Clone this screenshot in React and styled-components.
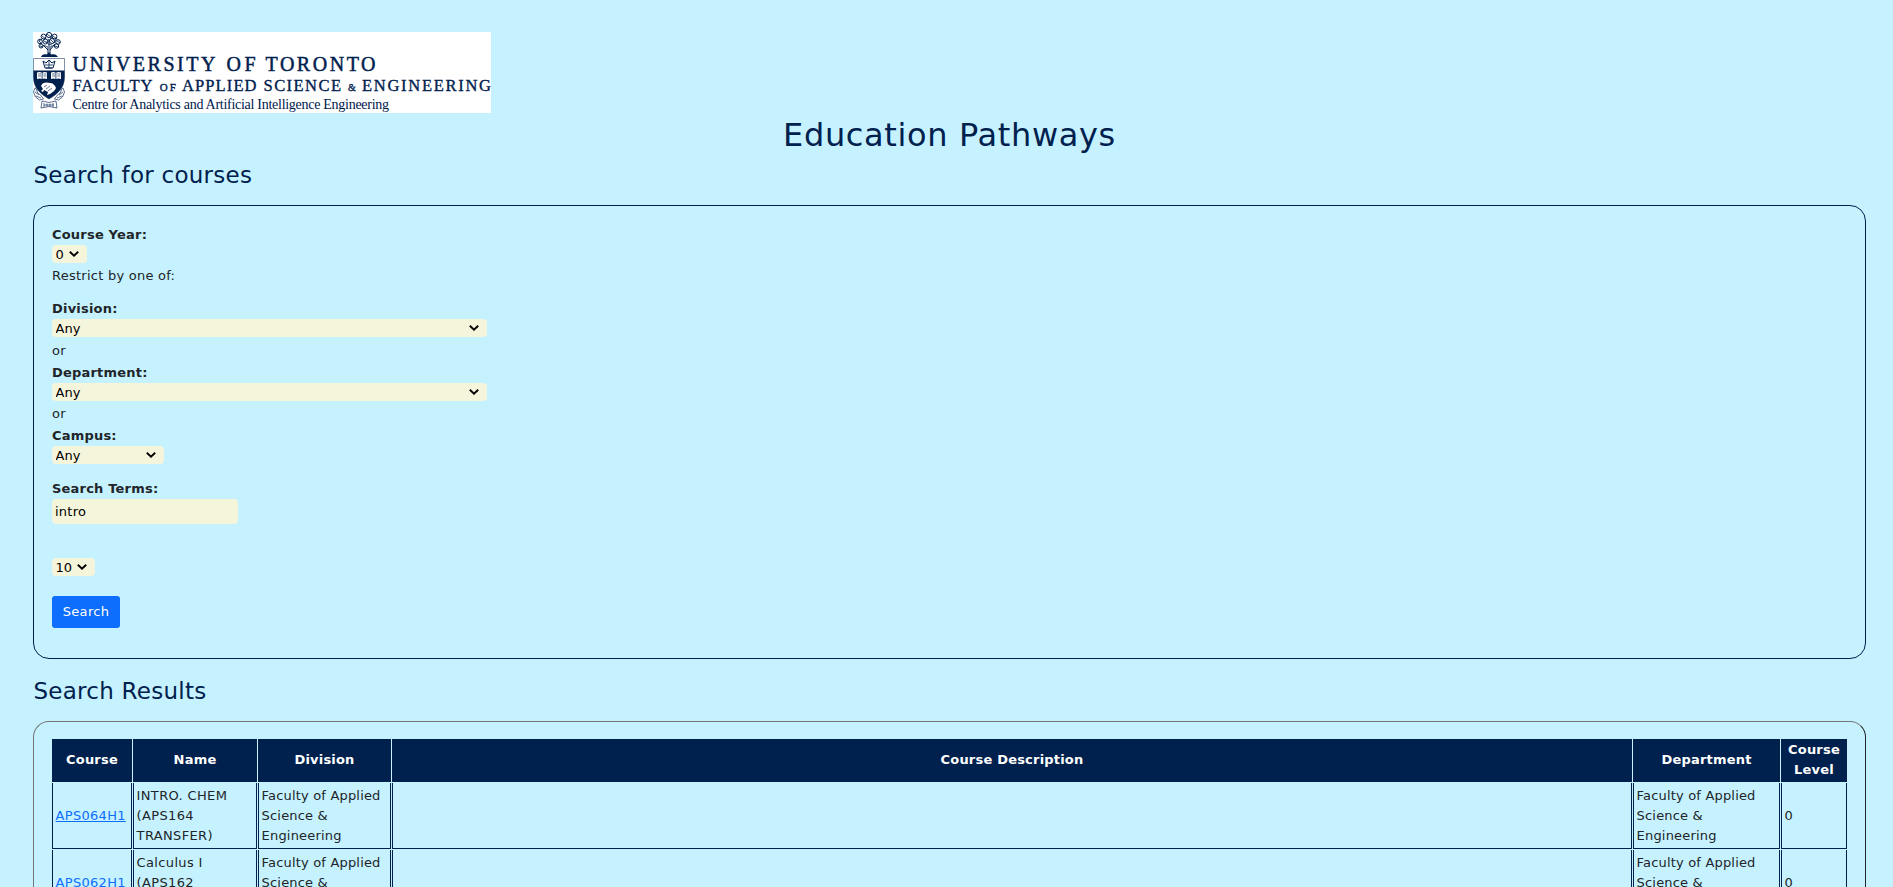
import React from "react";
import styled, { createGlobalStyle } from "styled-components";

const NAVY = "#00204e";

const GlobalStyle = createGlobalStyle`
  *, *::before, *::after { box-sizing: border-box; }
  html { overflow: hidden; }
  body {
    margin: 0;
    background: #c6f2ff;
    color: #212529;
    font-family: Verdana, "DejaVu Sans", sans-serif;
    font-size: 13px;
    line-height: 20px;
    letter-spacing: 0.25px;
    height: 887px;
    overflow: hidden;
  }
`;

const Page = styled.main`
  padding: 32px 27px 0 33px;
`;

const LogoSvg = styled.svg`
  display: block;
  width: 458px;
  height: 81px;
  background: #fff;
  font-family: "Liberation Serif", serif;
  letter-spacing: 0;
  fill: ${NAVY};
`;

const Title = styled.h1`
  margin: 0;
  height: 42px;
  padding-top: 3px;
  text-align: center;
  font-size: 32px;
  line-height: 38px;
  font-weight: 400;
  letter-spacing: 0.65px;
  color: ${NAVY};
`;

const Heading = styled.h2`
  margin: 0;
  padding-top: ${(p) => p.$top}px;
  padding-left: 0.5px;
  height: ${(p) => p.$height}px;
  font-size: 23px;
  line-height: 30px;
  font-weight: 400;
  letter-spacing: 0.25px;
  color: ${NAVY};
`;

const Panel = styled.section`
  padding: ${(p) => p.$padding || "18px"};
  border: 1px solid ${NAVY};
  border-radius: 16px;
`;

const ResultsPanel = styled(Panel)`
  padding: 17px 18px;
  border-color: #767676 #212529 #212529 #767676;
`;

const Form = styled.form`
  display: flex;
  flex-direction: column;
  align-items: flex-start;
`;

const Field = styled.div`
  display: flex;
  flex-direction: column;
  align-items: flex-start;
  margin-bottom: ${(p) => p.$gap}px;
`;

const Label = styled.label`
  font-weight: 700;
  letter-spacing: 0.2px;
`;

const Note = styled.div`
  margin-bottom: ${(p) => p.$gap}px;
`;

const SelectBox = styled.div`
  display: grid;
  align-items: center;
  width: ${(p) => p.$width}px;
  height: 18px;
  margin-bottom: ${(p) => p.$gap || 0}px;
  border-radius: 4px;
  background: beige;
`;

const Select = styled.select`
  grid-area: 1 / 1;
  appearance: none;
  width: 100%;
  height: 18px;
  padding: 2px 18px 0 3.500px;
  border: 0;
  border-radius: 4px;
  background: transparent;
  color: #000;
  font: inherit;
  line-height: 16px;
  letter-spacing: 0.1px;
`;

const Chevron = styled.svg`
  grid-area: 1 / 1;
  justify-self: end;
  width: 10px;
  height: 6px;
  margin-right: 8px;
  pointer-events: none;
`;

const TextInput = styled.input`
  width: 186px;
  height: 25px;
  padding: 1px 3px;
  border: 0;
  border-radius: 4px;
  background: beige;
  color: #000;
  font: inherit;
  letter-spacing: inherit;
`;

const SearchButton = styled.button`
  width: 68px;
  height: 32px;
  padding: 0;
  border: 0;
  border-radius: 3px;
  background: #0d6efd;
  color: #fff;
  font: inherit;
  letter-spacing: 0.3px;
`;

const Table = styled.table`
  table-layout: fixed;
  border-collapse: separate;
  border-spacing: 1px;
  margin: -1px;
  width: 1797px;
`;

const HeadCell = styled.th`
  height: 43px;
  padding: 0 2px 2px;
  background: ${NAVY};
  color: #fff;
  font-weight: 700;
  letter-spacing: 0.2px;
  text-align: center;
  vertical-align: middle;
`;

const Cell = styled.td`
  height: 66px;
  padding: 3px 0 2px 2.600px;
  border: solid ${NAVY};
  border-width: 0 1px 1px;
  line-height: 19.800px;
  letter-spacing: ${(p) => p.$tracking || 0.18}px;
  vertical-align: middle;
  white-space: pre-line;
`;

const CourseLink = styled.a`
  color: #0d6efd;
  letter-spacing: 0.3px;
  text-decoration: underline;
`;

function Logo() {
  return (
    <LogoSvg viewBox="0 0 458 81" role="img" aria-label="University of Toronto">
      <g fill="none" stroke={NAVY} strokeWidth="1">
        <path d="M15 24V14M17 24V14M15 18L10 13M17 18L22 12M16 14V8" />
        <circle cx="16" cy="3" r="2.6" />
        <circle cx="10.500" cy="4.500" r="2.400" />
        <circle cx="21.500" cy="4.500" r="2.400" />
        <circle cx="7" cy="9.500" r="2.300" />
        <circle cx="12.500" cy="9.500" r="2.500" />
        <circle cx="19" cy="9" r="2.500" />
        <circle cx="25" cy="10" r="2.300" />
        <circle cx="8" cy="14" r="2" />
        <circle cx="23.500" cy="14" r="2.200" />
        <path strokeWidth="0.8" d="M14 2l4 3M9 4l4 3M20 4l4 3M6 9l3 3M11 9l4 2M18 8l3 3M24 9l3 2M7 14l3 1M22 14l3 1M13 5l-2 3M19 4l-2 4M16 7l-3 4M9 7l-3 2M23 7l-2 4M15 12l4 1M11 13l3 2M18 15l3-2" />
      </g>
      <path d="M8 25c1-3 4-3 6-2.500l2-2.500 2 2.500c3-.5 5-.5 7 2.500z" />
      <path d="M.5 26.500h31V45c0 11-7 17-15.500 22C7.500 62 .5 56 .5 45z" fill="#fff" stroke={NAVY} strokeWidth="0.7" strokeOpacity="0.7" />
      <path d="M.5 38.500h31V45c0 11-7 17-15.500 22C7.500 62 .5 56 .5 45z" />
      <path d="M10 29l3 2 3-3 3 3 3-2-2 7h-8z" fill="none" stroke={NAVY} />
      <path d="M12 33h8M13 36h6M16 29v7" stroke={NAVY} strokeWidth="0.8" />
      <g fill="#fff">
        <path d="M4 40.500q2.500-1.200 4.700 0v6.500q-2.400-1-4.700 0zM9.500 40.500q2.500-1.200 4.500 0v6.500q-2.200-1-4.500 0zM18 40.500q2.500-1.200 4.500 0v6.500q-2.200-1-4.500 0zM23.300 40.500q2.500-1.200 4.700 0v6.500q-2.300-1-4.700 0z" />
        <path d="M8 54c1-4 6-4 9-3 3 0 5 2 6 5-1 3-4 4-6 6l-3 1 1-3-4-2-1 2-2-1 2-2z" />
      </g>
      <path d="M5 42h3M5 44h3M10.500 42h3M10.500 44h3M19 42h3M19 44h3M24.300 42h3M24.300 44h3" stroke={NAVY} strokeWidth="0.6" />
      <path d="M11 55l3-2M13 57l4-3M15 59l4-3" stroke={NAVY} strokeWidth="0.6" />
      <g fill="none" stroke={NAVY} strokeWidth="0.8" strokeOpacity="0.8">
        <path d="M2 56l-1.500 4 2 5 4 3 4-1-3-4-3-2-1-4zM30 56l1.500 4-2 5-4 3-4-1 3-4 3-2 1-4z" />
        <path d="M2 60l4 3M3 64l5 2M30 60l-4 3M29 64l-5 2" />
        <path d="M9 69q7 3 14 0l1 7q-8-3-16 0zM11 71v4M14 71.500v3M17 71.500v3M20 71v4M11 73h10" />
      </g>
      <g fontSize="20" stroke={NAVY} strokeWidth="0.45">
        <text x="39.500" y="39" textLength="143">UNIVERSITY</text>
        <text x="193.500" y="39" textLength="29">OF</text>
        <text x="232.500" y="39" textLength="110">TORONTO</text>
      </g>
      <g fontSize="16.500" stroke={NAVY} strokeWidth="0.35">
        <text x="39.500" y="58.500" textLength="80">FACULTY</text>
        <text x="126.800" y="58.500" fontSize="11" textLength="16">OF</text>
        <text x="149" y="58.500" textLength="74.500">APPLIED</text>
        <text x="230.500" y="58.500" textLength="77.500">SCIENCE</text>
        <text x="315" y="58.500" fontSize="10">&amp;</text>
        <text x="329" y="58.500" textLength="129">ENGINEERING</text>
      </g>
      <text x="39.500" y="77" fontSize="14" textLength="316.500">Centre for Analytics and Artificial Intelligence Engineering</text>
    </LogoSvg>
  );
}

function Dropdown({ id, value, width, gap }) {
  return (
    <SelectBox $width={width} $gap={gap}>
      <Select id={id} defaultValue={value}>
        <option value={value}>{value}</option>
      </Select>
      <Chevron viewBox="0 0 10 6">
        <path d="M.8.8L5 4.700 9.200.8" fill="none" stroke="#000" strokeWidth="1.900" />
      </Chevron>
    </SelectBox>
  );
}

const COLUMNS = [
  ["Course", 80],
  ["Name", 124],
  ["Division", 133],
  ["Course Description", 1240],
  ["Department", 147],
  ["Course Level", 66],
];

const FACULTY = "Faculty of Applied\nScience &\nEngineering";

const COURSES = [
  { code: "APS064H1", name: "INTRO. CHEM\n(APS164\nTRANSFER)", level: 0 },
  { code: "APS062H1", name: "Calculus I\n(APS162\nTRANSFER)", level: 0 },
];

export default function App() {
  return (
    <>
      <GlobalStyle />
      <Page>
        <Logo />
        <Title>Education Pathways</Title>
        <Heading $top={5} $height={50}>Search for courses</Heading>
        <Panel $padding="19px 18px 30px">
          <Form onSubmit={(e) => e.preventDefault()}>
            <Field $gap={3}>
              <Label htmlFor="year">Course Year:</Label>
              <Dropdown id="year" value="0" width={35} />
            </Field>
            <Note $gap={13}>Restrict by one of:</Note>
            <Field $gap={4}>
              <Label htmlFor="division">Division:</Label>
              <Dropdown id="division" value="Any" width={435} />
            </Field>
            <Note $gap={2}>or</Note>
            <Field $gap={3}>
              <Label htmlFor="department">Department:</Label>
              <Dropdown id="department" value="Any" width={435} />
            </Field>
            <Note $gap={2}>or</Note>
            <Field $gap={15}>
              <Label htmlFor="campus">Campus:</Label>
              <Dropdown id="campus" value="Any" width={112} />
            </Field>
            <Field $gap={34}>
              <Label htmlFor="terms">Search Terms:</Label>
              <TextInput id="terms" defaultValue="intro" />
            </Field>
            <Dropdown id="count" value="10" width={43} gap={20} />
            <SearchButton type="submit">Search</SearchButton>
          </Form>
        </Panel>
        <Heading $top={17} $height={62}>Search Results</Heading>
        <ResultsPanel>
          <Table>
            <colgroup>
              {COLUMNS.map(([name, width]) => (
                <col key={name} width={width} />
              ))}
            </colgroup>
            <thead>
              <tr>
                {COLUMNS.map(([name]) => (
                  <HeadCell key={name}>{name}</HeadCell>
                ))}
              </tr>
            </thead>
            <tbody>
              {COURSES.map((course) => (
                <tr key={course.code}>
                  <Cell><CourseLink href="#">{course.code}</CourseLink></Cell>
                  <Cell $tracking={0.35}>{course.name}</Cell>
                  <Cell>{FACULTY}</Cell>
                  <Cell />
                  <Cell>{FACULTY}</Cell>
                  <Cell>{course.level}</Cell>
                </tr>
              ))}
            </tbody>
          </Table>
        </ResultsPanel>
      </Page>
    </>
  );
}
